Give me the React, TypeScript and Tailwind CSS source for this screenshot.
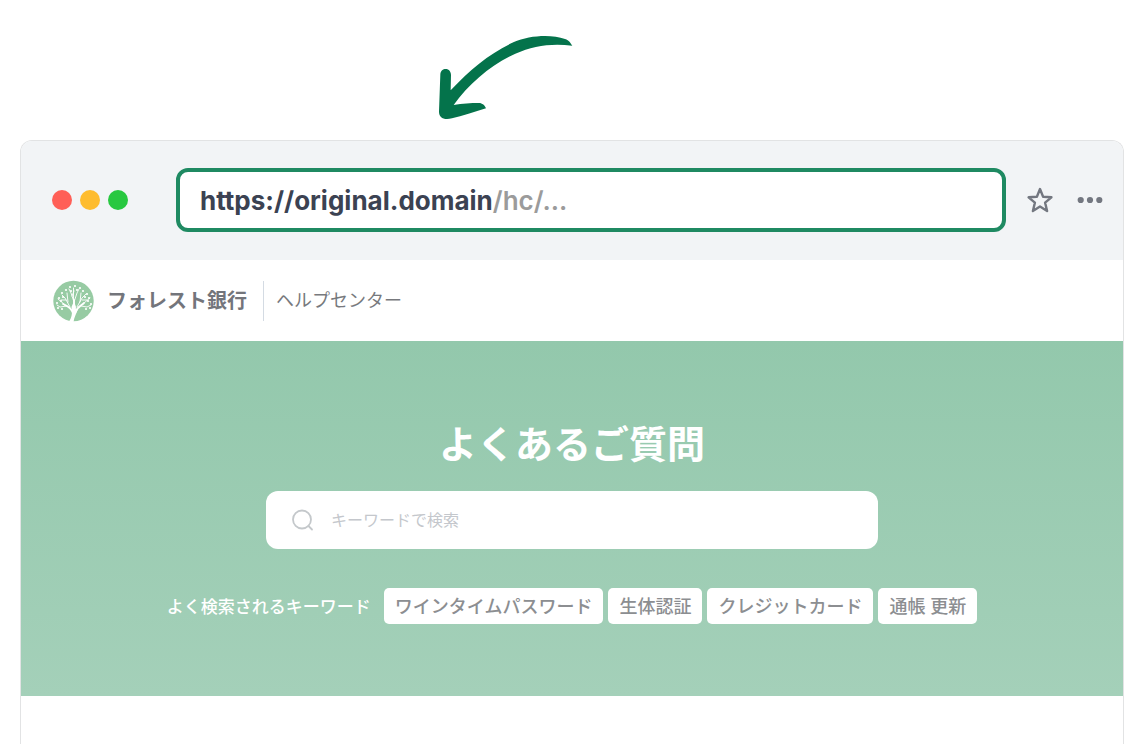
import type { ReactNode } from "react";

const keywords = ["ワインタイムパスワード", "生体認証", "クレジットカード", "通帳 更新"];

export default function App() {
  return (
    <main className="min-h-screen bg-white px-5 pt-[35px] pb-2 font-['Inter','Noto_Sans_CJK_JP',sans-serif]">
      <CurvedArrow />
      <section className="mt-[21px] overflow-hidden rounded-t-xl border border-b-0 border-[#e2e3e4]">
        <BrowserBar />
        <SiteHeader />
        <Hero />
        <div className="h-12 bg-white" />
      </section>
    </main>
  );
}

function BrowserBar() {
  return (
    <div className="flex items-center bg-[#f2f4f6] pt-[27px] pr-5 pb-7 pl-[31px]">
      <div className="flex gap-2">
        <span className="h-5 w-5 rounded-full bg-[#ff5f57]" />
        <span className="h-5 w-5 rounded-full bg-[#febc2e]" />
        <span className="h-5 w-5 rounded-full bg-[#28c840]" />
      </div>
      <div
        role="textbox"
        aria-label="URL"
        tabIndex={0}
        className="ml-12 flex h-16 flex-1 items-center rounded-xl border-4 border-[#1f8a62] bg-white px-5 text-[26px] font-bold text-[#3b4252]"
      >
        <span>https://original.domain</span>
        <span className="font-semibold text-[#9b9b9b]">/hc/...</span>
      </div>
      <IconButton label="ブックマーク" className="ml-5">
        <StarIcon />
      </IconButton>
      <IconButton label="メニュー" className="ml-[23px]">
        <DotsIcon />
      </IconButton>
    </div>
  );
}

type IconButtonProps = {
  label: string;
  className: string;
  children: ReactNode;
};

function IconButton({ label, className, children }: IconButtonProps) {
  return (
    <button type="button" aria-label={label} className={`text-[#737780] ${className}`}>
      {children}
    </button>
  );
}

function SiteHeader() {
  return (
    <header className="flex h-[81px] items-center bg-white px-8">
      <a href="#" className="flex items-center gap-3">
        <TreeLogo />
        <span className="text-xl font-bold text-[#73757b]">フォレスト銀行</span>
      </a>
      <span className="ml-4 h-10 border-l border-[#d4dbe3]" />
      <span className="ml-3 text-lg text-[#77797d]">ヘルプセンター</span>
    </header>
  );
}

function Hero() {
  return (
    <div className="flex flex-col items-center bg-linear-to-b from-[#93c8ac] to-[#a4d0b9] px-5 pt-[79px] pb-[72px]">
      <h1 className="text-[38px] leading-[48px] font-bold text-white">よくあるご質問</h1>
      <label className="mt-[23px] flex h-[58px] w-full max-w-[612px] items-center gap-[17px] rounded-xl bg-white px-6">
        <SearchIcon />
        <input
          type="search"
          aria-label="キーワードで検索"
          placeholder="キーワードで検索"
          className="min-w-0 flex-1 bg-transparent text-base text-gray-700 outline-none placeholder:text-[#c4c7cc]"
        />
      </label>
      <div className="mt-[39px] flex flex-wrap items-center justify-center gap-[5px]">
        <span className="mr-2 pt-1 text-[17px] font-medium text-white">よく検索されるキーワード</span>
        {keywords.map((keyword) => (
          <button
            key={keyword}
            type="button"
            className="h-9 rounded-[5px] bg-white px-[11px] pt-0.5 text-lg leading-8 font-medium text-[#8c8e91]"
          >
            {keyword}
          </button>
        ))}
      </div>
    </div>
  );
}

function CurvedArrow() {
  return (
    <svg className="ml-[419px] h-[84px] w-[134px]" viewBox="57 45 402 252" fill="#04734b" aria-hidden>
      <path d="M61 163C62 152 69 147 77 147C87 147 93 155 93 165L92 211C150 149 211 98 280 67C330 45 395 43 435 57C448 61 451 69 457 77C395 69 340 77 286 101C218 131 146 190 101 255C127 251 153 249 176 249C188 249 194 256 198 265C163 276 127 288 96 295C70 301 57 292 57 275Z" />
    </svg>
  );
}

function StarIcon() {
  return (
    <svg className="h-7 w-7" viewBox="0 0 28 28" fill="none" stroke="currentColor" strokeWidth="2.4" strokeLinejoin="round" aria-hidden>
      <path d="M14 3L17.1 10.7L25.4 11.3L19.1 16.6L21.1 25L14 20.5L6.9 25L8.9 16.6L2.6 11.3L10.9 10.7Z" />
    </svg>
  );
}

function DotsIcon() {
  return (
    <svg className="h-7 w-[26px]" viewBox="0 0 26 28" fill="currentColor" aria-hidden>
      <circle cx="3.7" cy="14" r="3.1" />
      <circle cx="13" cy="14" r="3.1" />
      <circle cx="22.3" cy="14" r="3.1" />
    </svg>
  );
}

function SearchIcon() {
  return (
    <svg className="h-6 w-6" viewBox="0 0 24 24" fill="none" stroke="#c4c8cb" strokeWidth="1.8" strokeLinecap="round" aria-hidden>
      <circle cx="12" cy="11.5" r="9" />
      <path d="M18.5 18L22 21.5" />
    </svg>
  );
}

const leaves = [
  [13, 10], [17, 7], [22, 6], [27, 8], [18, 11], [24, 10], [30, 11],
  [9, 13], [34, 14], [6, 18], [10, 17], [32, 17], [36, 18], [4, 23],
  [8, 21], [35, 21], [38, 24], [5, 28], [9, 29], [33, 29], [37, 28],
];

function TreeLogo() {
  return (
    <svg className="h-[42px] w-[42px]" viewBox="0 0 42 42" aria-hidden>
      <circle cx="20.5" cy="21" r="20.2" fill="#97cba3" />
      <path d="M15.5 42C19 38 19.500 33 18.500 27L21 21L23 27C22.500 29 23 30 25 28.500C24 33 21 37 20.500 42Z" fill="#fff" />
      <g fill="none" stroke="#fff" strokeWidth="0.9" strokeLinecap="round">
        <path strokeWidth="1.8" d="M20 33C18 27 14 26 10 24M21 30V20M22 33C24 27 28 26 31 23" />
        <path d="M21 22L18 13L16 9M21 22L24 13L26 9M20.5 20V8M17 27L12 18L9 15M24 27L29 18L33 14M14 26L7 27L4 25M28 26L34 27L38 25M11 24L5 19M31 23L37 18M15 22L14 13M27 22L28 13M19 16L21 11M13 20L8 20M29 20L34 20" />
      </g>
      <g fill="#fff">
        {leaves.map(([x, y]) => (
          <circle key={`${x}-${y}`} cx={x} cy={y} r="1.1" />
        ))}
      </g>
    </svg>
  );
}
